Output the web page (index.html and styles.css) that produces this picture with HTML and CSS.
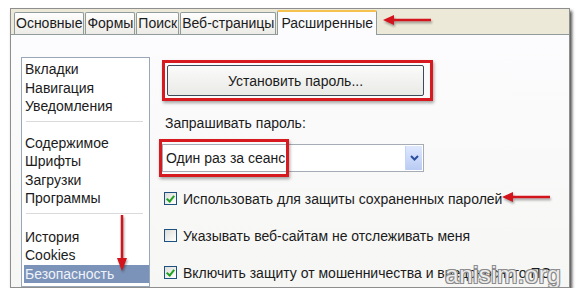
FILE: index.html
```html
<!DOCTYPE html>
<html lang="ru">
<head>
    <meta charset="UTF-8">
    <title>Настройки — Расширенные</title>
    <link rel="stylesheet" href="styles.css">
</head>
<body>
    <div class="window">
        <div class="tabs">
            <div class="tab">Основные</div>
            <div class="tab">Формы</div>
            <div class="tab">Поиск</div>
            <div class="tab">Веб-страницы</div>
            <div class="tab active">Расширенные</div>
        </div>

        <div class="panel">
            <ul class="sidebar">
                <li class="group">
                    <span>Вкладки</span>
                    <span>Навигация</span>
                    <span>Уведомления</span>
                </li>
                <li class="sep"></li>
                <li class="group mid">
                    <span>Содержимое</span>
                    <span>Шрифты</span>
                    <span>Загрузки</span>
                    <span>Программы</span>
                </li>
                <li class="sep"></li>
                <li class="group">
                    <span>История</span>
                    <span>Cookies</span>
                    <span class="selected">Безопасность</span>
                </li>
            </ul>

            <div class="content">
                <div class="mark">
                    <button class="btn">Установить пароль...</button>
                </div>

                <p class="label">Запрашивать пароль:</p>

                <div class="select">
                    <span class="value">Один раз за сеанс</span>
                    <span class="drop">
                        <svg width="9" height="6" viewBox="0 0 9 6"><path d="M1 1 L4.5 4.5 L8 1" fill="none" stroke="#2b4f9e" stroke-width="2"/></svg>
                    </span>
                    <div class="mark-box"></div>
                </div>

                <label class="check"><span class="box on"></span>Использовать для защиты сохраненных паролей</label>
                <label class="check"><span class="box"></span>Указывать веб-сайтам не отслеживать меня</label>
                <label class="check"><span class="box on"></span>Включить защиту от мошенничества и вредоносного ПО</label>
            </div>
        </div>

        <div class="watermark">anisim.org</div>
    </div>

    <!-- red annotation arrows -->
    <svg class="arrow arrow-tab" width="52" height="14" viewBox="0 0 52 14">
        <path d="M12 7 H50" stroke="#d3141c" stroke-width="2.5"/>
        <path d="M2 7 L13 2 L13 12 Z" fill="#d3141c"/>
    </svg>
    <svg class="arrow arrow-check" width="52" height="14" viewBox="0 0 52 14">
        <path d="M12 7 H50" stroke="#d3141c" stroke-width="2.5"/>
        <path d="M2 7 L13 2 L13 12 Z" fill="#d3141c"/>
    </svg>
    <svg class="arrow arrow-down" width="14" height="60" viewBox="0 0 14 60">
        <path d="M7 2 V46" stroke="#d3141c" stroke-width="2.5"/>
        <path d="M7 58 L2 45 L12 45 Z" fill="#d3141c"/>
    </svg>
</body>
</html>
```

FILE: styles.css
```css
/* Options dialog, XP look */
body {
    margin: 0;
    background: #fff;
    font-family: "Liberation Sans", "DejaVu Sans", sans-serif;
    font-size: 14px;
    color: #1b1b1b;
}

/* Window frame */
.window {
    position: relative;
    margin: 8px 0 0 10px;
    width: 558px;
    height: 278px;
    border: 1px solid #8e8e8e;
    background: #ece9d8;
    box-shadow: 2px 3px 3px rgba(0, 0, 0, 0.7);
    overflow: hidden;
}

/* Tabs */
.tabs {
    display: flex;
    align-items: flex-end;
    height: 25px;
    padding-left: 3px;
}

.tab {
    height: 21px;
    line-height: 21px;
    padding: 0 1px;
    margin-right: 1px;
    border: 1px solid #919b9c;
    border-bottom: none;
    border-radius: 2px 2px 0 0;
    background: linear-gradient(to bottom, #fefefe, #ecebe6);
    white-space: nowrap;
}

.tab.active {
    height: 23px;
    line-height: 23px;
    padding: 0 3px;
    margin-bottom: -1px;
    background: #fcfcfe;
    border-top: 2px solid #f5c14f;
}

/* Panel */
.panel {
    display: flex;
    height: 252px;
    border-top: 1px solid #919b9c;
    background: linear-gradient(to bottom, #fcfcfe, #f6f6f4);
}

/* Left list */
.sidebar {
    list-style: none;
    margin: 22px 0 0 10px;
    padding: 0;
    width: 127px;
    border: 1px solid #9aa7b8;
    background: #fff;
}

.group {
    padding: 2px 0 0 2px;
    line-height: 18.5px;
}

.group span {
    display: block;
    padding-left: 1px;
}

.group.mid {
    padding-top: 0;
}

.sep {
    height: 1px;
    margin: 5px 6px 12px 4px;
    background: #dadada;
}

.selected {
    background: #7c93b9;
    color: #eef2fa;
}

/* Right side */
.content {
    flex: 1;
    padding: 25px 0 0 12px;
    white-space: nowrap;
}

.mark {
    width: 261px;
    border: 3px solid #d71920;
    padding: 2px;
    box-shadow: 1px 2px 3px rgba(0, 0, 0, 0.35);
}

.btn {
    display: block;
    width: 257px;
    height: 31px;
    font: inherit;
    color: #1b1b1b;
    border: 1px solid #3d4a5a;
    border-radius: 2px;
    background: linear-gradient(to bottom, #fbfbfb, #e9e9e6);
}

.label {
    margin: 13px 0 0 3px;
    line-height: 18px;
}

.select {
    position: relative;
    display: flex;
    width: 260px;
    height: 26px;
    margin-top: 12px;
    border: 1px solid #a5acb5;
    background: #fff;
}

.value {
    flex: 1;
    line-height: 26px;
    padding-left: 3px;
}

.drop {
    display: flex;
    align-items: center;
    justify-content: center;
    width: 16px;
    margin: 1px;
    border-left: 1px solid #c3d3fd;
    background: linear-gradient(to bottom, #dfe8fe, #b9cbf3);
}

.mark-box {
    position: absolute;
    left: -4px;
    top: -6px;
    width: 124px;
    height: 32px;
    border: 3px solid #d71920;
    box-shadow: 1px 2px 3px rgba(0, 0, 0, 0.35);
}

/* Checkboxes */
.check {
    display: flex;
    align-items: center;
    gap: 6px;
    margin: 16px 0 0 2px;
    height: 21px;
}

.check + .check {
    margin-top: 16px;
}

.box {
    width: 11px;
    height: 11px;
    border: 1px solid #1c5180;
    background: linear-gradient(135deg, #dcdcd7, #fff);
    position: relative;
}

.box.on::after {
    content: "";
    position: absolute;
    left: 3px;
    top: 1px;
    width: 3px;
    height: 6px;
    border: solid #21a121;
    border-width: 0 2px 2px 0;
    transform: rotate(40deg);
}

/* Watermark */
.watermark {
    position: absolute;
    right: 8px;
    bottom: -2px;
    font-size: 24px;
    color: #ececec;
    text-shadow: -1px -1px 0 #8a8a8a, 1px -1px 0 #8a8a8a, -1px 1px 0 #8a8a8a, 1px 1px 0 #8a8a8a;
    letter-spacing: 0.5px;
}

/* Annotation arrows */
.arrow {
    position: absolute;
    filter: drop-shadow(1px 2px 1px rgba(0, 0, 0, 0.35));
}

.arrow-tab {
    left: 381px;
    top: 13px;
}

.arrow-check {
    left: 500px;
    top: 190px;
}

.arrow-down {
    left: 115px;
    top: 213px;
}
```
